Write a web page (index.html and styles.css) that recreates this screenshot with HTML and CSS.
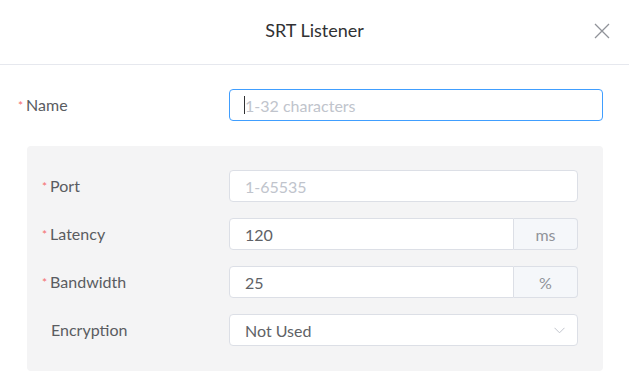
FILE: index.html
```html
<!DOCTYPE html>
<html lang="en">
<head>
    <meta charset="UTF-8">
    <title>SRT Listener</title>
    <link rel="stylesheet" href="styles.css">
</head>
<body>
    <div class="dialog">
        <div class="dialogHeader">
            <span class="dialogTitle">SRT Listener</span>
            <button class="closeBtn" type="button" aria-label="Close">
                <svg width="16" height="16" viewBox="0 0 16 16">
                    <path d="M1 1L15 15M15 1L1 15" stroke="#909399" stroke-width="1.3" fill="none"/>
                </svg>
            </button>
        </div>

        <form class="dialogBody">
            <div class="formRow nameRow">
                <label class="formLabel required">Name</label>
                <div class="field">
                    <input class="textInput focused" type="text" placeholder="1-32 characters">
                    <span class="caret"></span>
                </div>
            </div>

            <div class="groupBox">
                <div class="formRow">
                    <label class="formLabel required">Port</label>
                    <div class="field">
                        <input class="textInput" type="text" placeholder="1-65535">
                    </div>
                </div>
                <div class="formRow">
                    <label class="formLabel required">Latency</label>
                    <div class="field withAppend">
                        <input class="textInput" type="text" value="120">
                        <span class="append">ms</span>
                    </div>
                </div>
                <div class="formRow">
                    <label class="formLabel required">Bandwidth</label>
                    <div class="field withAppend">
                        <input class="textInput" type="text" value="25">
                        <span class="append">%</span>
                    </div>
                </div>
                <div class="formRow">
                    <label class="formLabel">Encryption</label>
                    <div class="field">
                        <div class="textInput select">
                            <span>Not Used</span>
                            <svg width="11" height="7" viewBox="0 0 11 7">
                                <path d="M0.5 0.8L5.5 5.8L10.5 0.8" stroke="#c0c4cc" stroke-width="1" fill="none"/>
                            </svg>
                        </div>
                    </div>
                </div>
            </div>
        </form>
    </div>
</body>
</html>
```

FILE: styles.css
```css
* {
    box-sizing: border-box;
    font-family: Lato, "Open Sans", sans-serif;
}

body {
    margin: 0;
    background-color: #fff;
    color: #606266;
}

.dialog {
    width: 629px;
}

.dialogHeader {
    position: relative;
    height: 65px;
    display: flex;
    align-items: center;
    justify-content: center;
    border-bottom: 1px solid #e6e8ee;
    padding-bottom: 4px;
}

.dialogTitle {
    font-size: 18px;
    color: #303133;
}

.closeBtn {
    position: absolute;
    right: 19px;
    top: 23px;
    border: none;
    background: none;
    padding: 0;
    width: 16px;
    height: 16px;
    cursor: pointer;
}

.closeBtn svg {
    display: block;
}

.dialogBody {
    padding: 24px 26px 20px 18px;
}

.formRow {
    display: flex;
    align-items: center;
    height: 32px;
    margin-bottom: 16px;
}

.formRow:last-child {
    margin-bottom: 0;
}

.nameRow {
    margin-bottom: 25px;
}

.formLabel {
    flex: none;
    width: 211px;
    font-size: 16px;
    color: #5a5c61;
    padding-left: 9px;
    position: relative;
    top: -1px;
}

.formLabel.required {
    padding-left: 0;
}

.formLabel.required::before {
    content: "*";
    color: #f56c6c;
    font-size: 12px;
    margin-right: 3px;
    position: relative;
    top: -1px;
}

.groupBox {
    margin-left: 9px;
    background-color: #f4f4f5;
    border-radius: 4px;
    padding: 24px 25px 25px 15px;
}

.groupBox .formLabel {
    width: 187px;
}

.field {
    position: relative;
    flex: 1;
    display: flex;
    height: 32px;
}

.textInput {
    width: 100%;
    height: 32px;
    border: 1px solid #dcdfe6;
    border-radius: 4px;
    background-color: #fff;
    padding: 0 15px;
    font-size: 16px;
    color: #606266;
    outline: none;
}

.textInput::placeholder {
    color: #c0c4cc;
}

.textInput.focused {
    border-color: #409eff;
}

.caret {
    position: absolute;
    left: 15px;
    top: 7px;
    width: 1px;
    height: 18px;
    background-color: #303133;
}

.withAppend .textInput {
    border-radius: 4px 0 0 4px;
}

.append {
    flex: none;
    width: 64px;
    display: flex;
    align-items: center;
    justify-content: center;
    border: 1px solid #dcdfe6;
    border-left: none;
    border-radius: 0 4px 4px 0;
    background-color: #f5f7fa;
    color: #909399;
    font-size: 16px;
}

.select {
    display: flex;
    align-items: center;
    justify-content: space-between;
    padding-right: 12px;
}
```
